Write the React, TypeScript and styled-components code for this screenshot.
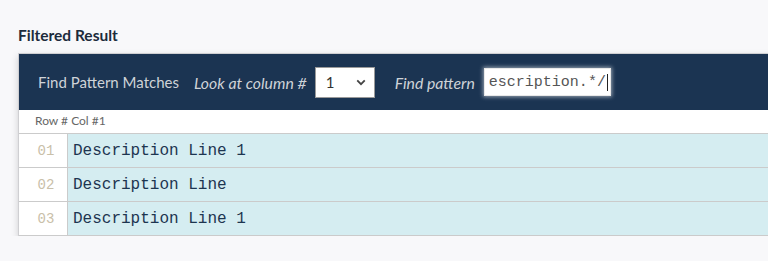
import React from 'react';
import styled, { createGlobalStyle } from 'styled-components';

const GlobalStyle = createGlobalStyle`
  body {
    margin: 0;
    background: #f8f8fa;
    font-family: Lato, "Open Sans", sans-serif;
    overflow: hidden;
  }
`;

const rows = [
  { num: '01', text: 'Description Line 1' },
  { num: '02', text: 'Description Line' },
  { num: '03', text: 'Description Line 1' }
];

export default function App() {
  return (
    <>
      <GlobalStyle />
      <Page>
        <Heading>Filtered Result</Heading>
        <Panel>
          <Toolbar>
            <Title>Find Pattern Matches</Title>
            <Label>Look at column #</Label>
            <SelectBox>
              <SelectValue>1</SelectValue>
              <Chevron viewBox="0 0 12 8">
                <path d="M1.5 1.5 L6 6 L10.5 1.5" fill="none" stroke="#444" strokeWidth="2.2" />
              </Chevron>
            </SelectBox>
            <Label $gap={20}>Find pattern</Label>
            <PatternInput>
              escription.*/<Caret />
            </PatternInput>
          </Toolbar>
          <HeaderRow>Row # Col #1</HeaderRow>
          {rows.map((row) => (
            <Row key={row.num}>
              <NumCell>{row.num}</NumCell>
              <TextCell>{row.text}</TextCell>
            </Row>
          ))}
        </Panel>
      </Page>
    </>
  );
}

const Page = styled.div`
  padding: 25px 0 0 18px;
`;

const Heading = styled.div`
  font-size: 15.5px;
  font-weight: 700;
  color: #1c2b3c;
  line-height: 20px;
  margin-bottom: 8px;
`;

const Panel = styled.div`
  width: 780px;
  border: 1px solid #cfcfd2;
  border-right: none;
  border-bottom: none;
  background: #fff;
  box-shadow: 0 3px 7px rgba(0, 0, 0, 0.17);
`;

const Toolbar = styled.div`
  display: flex;
  align-items: center;
  height: 56px;
  padding-left: 19px;
  background: #1b3452;
  color: #cfd3d8;
  font-size: 15px;
`;

const Title = styled.span`
  margin-right: 15px;
`;

const Label = styled.span<{ $gap?: number }>`
  font-style: italic;
  font-size: 15.8px;
  margin-left: ${({ $gap }) => $gap ?? 0}px;
  margin-right: 8px;
`;

const SelectBox = styled.div`
  display: flex;
  align-items: center;
  justify-content: space-between;
  box-sizing: border-box;
  width: 60px;
  height: 31px;
  padding: 0 8px 0 10px;
  background: #fff;
  border: 1px solid #9a9a9a;
`;

const SelectValue = styled.span`
  color: #333;
  font-size: 15px;
`;

const Chevron = styled.svg`
  width: 10px;
  height: 7px;
`;

const PatternInput = styled.div`
  display: flex;
  align-items: center;
  box-sizing: border-box;
  width: 127px;
  height: 28px;
  padding-left: 4px;
  margin-left: 1px;
  background: #fff;
  border: 1px solid #e8e8e8;
  box-shadow: 0 0 4px 1px rgba(255, 255, 255, 0.55);
  font-family: "Liberation Mono", monospace;
  font-size: 15px;
  color: #555;
`;

const Caret = styled.span`
  display: inline-block;
  width: 1px;
  height: 17px;
  margin-left: 1px;
  background: #222;
`;

const HeaderRow = styled.div`
  height: 23px;
  line-height: 22px;
  padding-left: 16px;
  font-size: 12px;
  color: #666;
  border-bottom: 1px solid #cbcbcb;
`;

const Row = styled.div`
  display: flex;
  height: 33px;
  border-bottom: 1px solid #cbcbcb;
`;

const NumCell = styled.div`
  width: 49px;
  box-sizing: border-box;
  padding-left: 6px;
  display: flex;
  align-items: center;
  justify-content: center;
  border-right: 1px solid #cbcbcb;
  font-family: "Liberation Mono", monospace;
  font-size: 14px;
  color: #c9c0a9;
  background: #fff;
`;

const TextCell = styled.div`
  flex: 1;
  display: flex;
  align-items: center;
  padding-left: 5px;
  background: #d5edf1;
  font-family: "Liberation Mono", monospace;
  font-size: 16px;
  color: #1d3550;
`;
